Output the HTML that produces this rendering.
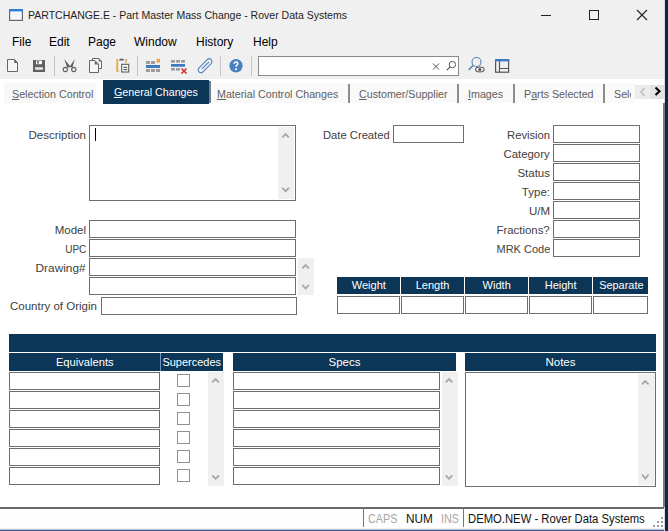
<!DOCTYPE html>
<html><head><meta charset="utf-8">
<style>
*{box-sizing:border-box;margin:0;padding:0}
html,body{width:668px;height:531px;overflow:hidden;background:#f0f0f0;font-family:"Liberation Sans",sans-serif}
.a{position:absolute}
.t{position:absolute;white-space:nowrap;line-height:1;transform-origin:0 0}
.r{position:absolute;white-space:nowrap;line-height:1;text-align:right;transform-origin:100% 0}
.c{position:absolute;white-space:nowrap;line-height:1;text-align:center}
.box{position:absolute;border:1px solid #6e6e6e;background:#fff;height:18px}
.hd{position:absolute;background:#0c3657;color:#fff;font-size:11.5px;line-height:17px;text-align:center;height:17px}
.lbl{font-size:11.5px;color:#404040}
.sx{display:inline-block}
.sb{position:absolute;background:#f0f0f0}
.chk{position:absolute;width:13px;height:13px;border:1px solid #909090;background:#fff}
.sep{position:absolute;width:1px;background:#c8c8c8}
.tsep{position:absolute;width:2px;background:#8c8c8c;top:84px;height:19px}
.tab{font-size:11.5px;color:#606060}
.u{text-decoration:underline;text-underline-offset:0.6px;text-decoration-thickness:1px}
</style></head><body>
<!-- title bar -->
<svg class="a" style="left:9px;top:9px" width="14" height="12" viewBox="0 0 14 12">
<rect x="0.6" y="0.6" width="12.8" height="10.8" fill="#f6f7f9" stroke="#5f6b78" stroke-width="1.2"/>
<rect x="0" y="0" width="14" height="2.4" fill="#2f7bd3"/>
</svg>
<div class="t" style="left:28px;top:9.7px;font-size:11px;color:#1e1e1e;transform:scaleX(0.955)">PARTCHANGE.E - Part Master Mass Change - Rover Data Systems</div>
<div class="a" style="left:541px;top:15px;width:10px;height:1px;background:#222"></div>
<div class="a" style="left:589px;top:10px;width:10px;height:10px;border:1px solid #222"></div>
<svg class="a" style="left:636px;top:9px" width="12" height="12" viewBox="0 0 12 12"><path d="M1 1L11 11M11 1L1 11" stroke="#222" stroke-width="1.1"/></svg>

<!-- menu -->
<div class="t" style="left:12px;top:35.8px;font-size:12px;color:#000">File</div>
<div class="t" style="left:49px;top:35.8px;font-size:12px;color:#000">Edit</div>
<div class="t" style="left:88px;top:35.8px;font-size:12px;color:#000">Page</div>
<div class="t" style="left:134px;top:35.8px;font-size:12px;color:#000">Window</div>
<div class="t" style="left:196px;top:35.8px;font-size:12px;color:#000">History</div>
<div class="t" style="left:253px;top:35.8px;font-size:12px;color:#000">Help</div>

<!-- toolbar -->
<svg class="a" style="left:0;top:50px" width="520" height="30" viewBox="0 50 520 30">
<g fill="none" stroke="#666" stroke-width="1">
<path d="M7.5 59.5H14.5L17.5 62.5V71.5H7.5Z" fill="#f6f6f6"/>
</g>
<path d="M14.2 59.2L18 63H14.2Z" fill="#666"/>
<path d="M33 60H45V72H33Z" fill="#606060"/>
<rect x="36" y="60.6" width="6" height="3.6" fill="#fff"/>
<rect x="37.2" y="61" width="1.6" height="2.6" fill="#606060"/>
<rect x="35" y="67.2" width="8" height="2.6" fill="#e4e4e4"/>
<rect x="54" y="56" width="1" height="20" fill="#c4c4c4"/>
<g fill="none" stroke="#5e5e5e" stroke-width="1.1">
<circle cx="65.3" cy="69.5" r="2.1"/>
<circle cx="73.8" cy="69.5" r="2.1"/>
</g>
<path d="M64.2 59L70.4 66.4L69 67.6L67.2 67.6Z" fill="#5e5e5e"/>
<path d="M74.8 59L69.8 66.4L71 67.6L72.4 67.6Z" fill="#5e5e5e"/>
<g stroke="#666" stroke-width="1" fill="#f6f6f6">
<path d="M92.5 58.5H99L101.5 61V68.5H92.5Z"/>
<path d="M89.5 60.5H95L98.5 64V72.5H89.5Z"/>
</g>
<path d="M98.7 58.7L101.6 61.6H98.7Z" fill="#666"/>
<path d="M94.7 60.7L98.4 64.4H94.7Z" fill="#666"/>
<rect x="116.3" y="59" width="1.8" height="12.4" fill="#eba746"/>
<rect x="116.3" y="70.5" width="3" height="1" fill="#e2a450"/>
<rect x="125.2" y="59" width="1.6" height="3.6" fill="#e2a656"/>
<path d="M119.2 60.6V59.4Q121.5 57.6 123.8 59.4V60.6Z" fill="#55606e"/>
<rect x="121.7" y="64.3" width="7" height="7.7" fill="#fafafa" stroke="#5e5e5e" stroke-width="1.1"/>
<rect x="123.4" y="66.8" width="3.8" height="1.1" fill="#555"/>
<rect x="123.4" y="69" width="3.8" height="1.1" fill="#555"/>
<rect x="137" y="56" width="1" height="20" fill="#c4c4c4"/>
<g fill="#9c9c9c">
<rect x="146" y="61" width="4" height="3"/><rect x="151" y="61" width="4" height="3"/>
<rect x="146" y="69" width="4" height="3"/><rect x="151" y="69" width="4" height="3"/><rect x="156" y="69" width="4" height="3"/>
<rect x="171" y="60" width="4" height="2.6"/><rect x="176" y="60" width="4" height="2.6"/><rect x="181" y="60" width="4" height="2.6"/>
<rect x="171" y="68" width="4" height="2.6"/><rect x="176" y="68" width="4" height="2.6"/>
</g>
<rect x="151" y="61" width="4" height="3" fill="#9c9c9c"/><rect x="156.5" y="58.8" width="3.6" height="3.8" fill="#eea64e"/>
<rect x="146" y="65" width="14" height="3" fill="#3d7ac4"/>
<rect x="171" y="64" width="14" height="2.7" fill="#3d7ac4"/>
<path d="M181.5 68.5L186.5 73.5M186.5 68.5L181.5 73.5" stroke="#d42a2a" stroke-width="1.6"/>
<g transform="translate(205.1 65.7) rotate(45)" fill="none" stroke="#4d7fbd" stroke-width="1.05">
<rect x="-2.8" y="-8.6" width="5.6" height="17.2" rx="2.8"/><path d="M0 -5.5V4.5"/>
</g>
<rect x="220" y="56" width="1" height="20" fill="#c4c4c4"/>
<circle cx="236" cy="65.8" r="6.7" fill="#4a7fc2"/>
<path d="M234.2 63.8Q234.2 62 236 62Q237.8 62 237.8 63.6Q237.8 64.5 236.8 65.1Q236 65.6 236 66.8" fill="none" stroke="#fff" stroke-width="1.5"/>
<rect x="235.1" y="68.3" width="1.8" height="1.8" fill="#fff"/>
<rect x="251" y="56" width="1" height="20" fill="#c4c4c4"/>
<rect x="258.5" y="56.5" width="200" height="19" fill="#fff" stroke="#8a8a8a"/>
<path d="M433 63.5L439 69.5M439 63.5L433 69.5" stroke="#555" stroke-width="1"/>
<circle cx="452.4" cy="64.6" r="3.2" fill="none" stroke="#555" stroke-width="1"/>
<path d="M450.2 66.8L446.8 70.2" stroke="#555" stroke-width="1.2"/>
<circle cx="476.5" cy="62" r="4.5" fill="none" stroke="#5782b8" stroke-width="1.1"/>
<path d="M473.2 65.4L468.6 70" stroke="#5782b8" stroke-width="1.5"/>
<ellipse cx="479.8" cy="69.5" rx="4.3" ry="2.5" fill="#f0f0f0" stroke="#5a5a5a" stroke-width="1.1"/>
<circle cx="479.8" cy="69.5" r="1.5" fill="#505050"/>
<rect x="495.6" y="59.6" width="13" height="12.6" fill="none" stroke="#555" stroke-width="1.2"/>
<rect x="495" y="59" width="14.2" height="2.4" fill="#3d7ac4"/>
<path d="M499.5 61V72M499.5 68.5H509" stroke="#555" stroke-width="1.1"/>
</svg>

<!-- tab strip -->
<div class="a" style="left:0;top:79px;width:664px;height:25px;background:#fff"></div>
<div class="a" style="left:4px;top:83px;width:92px;height:20px;background:#f8f8f8"></div>
<div class="t tab" style="left:12px;top:88.5px;transform:scaleX(0.93)"><span class="u">S</span>election Control</div>
<div class="a" style="left:211px;top:83px;width:424px;height:20px;background:#f9f9f9"></div>
<div class="a" style="left:103px;top:80px;width:106px;height:24px;background:#0c3657"></div>
<div class="a" style="left:209px;top:81px;width:2px;height:22px;background:#6f7d8c"></div>
<div class="t tab" style="left:114px;top:87px;color:#fff;transform:scaleX(0.93)"><span class="u">G</span>eneral Changes</div>
<div class="t tab" style="left:217px;top:88.5px;transform:scaleX(0.93)"><span class="u">M</span>aterial Control Changes</div>
<div class="tsep" style="left:348px"></div>
<div class="t tab" style="left:359px;top:88.5px;transform:scaleX(0.93)"><span class="u">C</span>ustomer/Supplier</div>
<div class="tsep" style="left:457px"></div>
<div class="t tab" style="left:468px;top:88.5px;transform:scaleX(0.93)"><span class="u">I</span>mages</div>
<div class="tsep" style="left:513px"></div>
<div class="t tab" style="left:524px;top:88.5px;transform:scaleX(0.93)">P<span class="u">a</span>rts Selected</div>
<div class="tsep" style="left:603px"></div>
<div class="a" style="left:612px;top:84px;width:19px;height:20px;overflow:hidden"><div class="t tab" style="left:2px;top:4.5px;transform:scaleX(0.93)">Selection</div></div>
<div class="a" style="left:635px;top:85px;width:15px;height:14px;background:#ececec"></div>
<div class="a" style="left:650px;top:85px;width:14px;height:14px;background:#e2e2e2"></div>
<svg class="a" style="left:635px;top:85px" width="29" height="14" viewBox="0 0 29 14">
<path d="M9.5 3L6 7L9.5 11" fill="none" stroke="#bdbdbd" stroke-width="1.6"/>
<path d="M20.5 2.5L24.5 6.3L20.5 10.1" fill="none" stroke="#000" stroke-width="2.1"/>
</svg>

<!-- content -->
<div class="a" style="left:0;top:104px;width:664px;height:404px;background:#fff"></div>

<div class="r lbl" style="right:582px;top:130px">Description</div>
<div class="box" style="left:89px;top:125px;width:207px;height:76px"></div>
<div class="sb" style="left:278px;top:127px;width:16px;height:72px"></div>
<div class="a" style="left:95px;top:128px;width:1px;height:13px;background:#000"></div>

<div class="t lbl" style="left:323px;top:130px;transform:scaleX(0.975)">Date Created</div>
<div class="box" style="left:393px;top:125px;width:71px"></div>

<div class="r lbl" style="right:118px;top:130px;transform:scaleX(0.977)">Revision</div>
<div class="box" style="left:553px;top:125px;width:87px"></div>
<div class="r lbl" style="right:118px;top:149px;transform:scaleX(0.99)">Category</div>
<div class="box" style="left:553px;top:144px;width:87px"></div>
<div class="r lbl" style="right:118px;top:168px">Status</div>
<div class="box" style="left:553px;top:163px;width:87px"></div>
<div class="r lbl" style="right:118px;top:187px">Type:</div>
<div class="box" style="left:553px;top:182px;width:87px"></div>
<div class="r lbl" style="right:118px;top:206px">U/M</div>
<div class="box" style="left:553px;top:201px;width:87px"></div>
<div class="r lbl" style="right:118px;top:225px;transform:scaleX(0.99)">Fractions?</div>
<div class="box" style="left:553px;top:220px;width:87px"></div>
<div class="r lbl" style="right:118px;top:244px;transform:scaleX(0.955)">MRK Code</div>
<div class="box" style="left:553px;top:239px;width:87px"></div>

<div class="r lbl" style="right:582px;top:225px">Model</div>
<div class="box" style="left:89px;top:220px;width:207px"></div>
<div class="r lbl" style="right:582px;top:244px;transform:scaleX(0.87)">UPC</div>
<div class="box" style="left:89px;top:239px;width:207px"></div>
<div class="r lbl" style="right:582px;top:263px;transform:scaleX(1.03)">Drawing#</div>
<div class="box" style="left:89px;top:258px;width:207px"></div>
<div class="box" style="left:89px;top:277px;width:207px"></div>
<div class="sb" style="left:298px;top:258px;width:16px;height:37px"></div>
<div class="t lbl" style="left:10px;top:301px">Country of Origin</div>
<div class="box" style="left:101px;top:297px;width:196px"></div>

<div class="hd" style="left:337px;top:277px;width:63px"><span class="sx" style="transform:scaleX(0.96)">Weight</span></div>
<div class="hd" style="left:401px;top:277px;width:63px"><span class="sx" style="transform:scaleX(0.96)">Length</span></div>
<div class="hd" style="left:465px;top:277px;width:63px"><span class="sx" style="transform:scaleX(0.96)">Width</span></div>
<div class="hd" style="left:529px;top:277px;width:63px"><span class="sx" style="transform:scaleX(0.96)">Height</span></div>
<div class="hd" style="left:593px;top:277px;width:55px;padding-left:2px"><span class="sx" style="transform:scaleX(0.95)">Separate</span></div>
<div class="box" style="left:337px;top:296px;width:63px"></div>
<div class="box" style="left:401px;top:296px;width:63px"></div>
<div class="box" style="left:465px;top:296px;width:63px"></div>
<div class="box" style="left:529px;top:296px;width:63px"></div>
<div class="box" style="left:593px;top:296px;width:55px"></div>

<div class="a" style="left:9px;top:334px;width:647px;height:18px;background:#0c3657"></div>
<div class="hd" style="left:9px;top:353px;width:151px;height:18px;line-height:18px"><span class="sx" style="transform:scaleX(0.97)">Equivalents</span></div>
<div class="a" style="left:160px;top:353px;width:1px;height:18px;background:#7193c4"></div>
<div class="hd" style="left:161px;top:353px;width:62px;height:18px;line-height:18px"><span class="sx" style="transform:scaleX(0.955)">Supercedes</span></div>
<div class="hd" style="left:233px;top:353px;width:223px;height:18px;line-height:18px">Specs</div>
<div class="hd" style="left:465px;top:353px;width:191px;height:18px;line-height:18px">Notes</div>

<div class="box" style="left:9px;top:372px;width:151px"></div>
<div class="chk" style="left:177px;top:374px"></div>
<div class="box" style="left:233px;top:372px;width:207px"></div>
<div class="box" style="left:9px;top:391px;width:151px"></div>
<div class="chk" style="left:177px;top:393px"></div>
<div class="box" style="left:233px;top:391px;width:207px"></div>
<div class="box" style="left:9px;top:410px;width:151px"></div>
<div class="chk" style="left:177px;top:412px"></div>
<div class="box" style="left:233px;top:410px;width:207px"></div>
<div class="box" style="left:9px;top:429px;width:151px"></div>
<div class="chk" style="left:177px;top:431px"></div>
<div class="box" style="left:233px;top:429px;width:207px"></div>
<div class="box" style="left:9px;top:448px;width:151px"></div>
<div class="chk" style="left:177px;top:450px"></div>
<div class="box" style="left:233px;top:448px;width:207px"></div>
<div class="box" style="left:9px;top:467px;width:151px"></div>
<div class="chk" style="left:177px;top:469px"></div>
<div class="box" style="left:233px;top:467px;width:207px"></div>
<div class="sb" style="left:208px;top:372px;width:16px;height:114px"></div>
<div class="sb" style="left:442px;top:372px;width:16px;height:114px"></div>
<div class="box" style="left:465px;top:372px;width:191px;height:115px"></div>
<div class="sb" style="left:638px;top:374px;width:17px;height:111px"></div>

<svg class="a" style="left:0;top:0" width="668" height="531"><g fill="none" stroke="#a6a6a6" stroke-width="1.8"><path d="M282.3 137.4L285.6 134.1L288.90000000000003 137.4M282.3 187.9L285.6 191.2L288.90000000000003 187.9"/><path d="M302.3 268.4L305.6 265.1L308.90000000000003 268.4M302.3 284.9L305.6 288.5L308.90000000000003 284.9"/><path d="M212.29999999999998 382.4L215.6 379.1L218.9 382.4M212.29999999999998 475.3L215.6 478.8L218.9 475.3"/><path d="M445.7 382.4L449.0 379.1L452.3 382.4M445.7 475.3L449.0 478.8L452.3 475.3"/><path d="M642.0 384.4L645.3 381.1L648.5999999999999 384.4M642.0 474.5L645.3 478.6L648.5999999999999 474.5"/></g></svg>
<!-- status bar -->
<div class="a" style="left:0;top:507px;width:664px;height:2px;background:#6a6a6a"></div>
<div class="a" style="left:0;top:509px;width:664px;height:20px;background:#fefefe"></div>
<div class="a" style="left:0;top:528px;width:664px;height:1px;background:#eef2ee"></div>
<div class="a" style="left:0;top:529px;width:665px;height:1px;background:#b4bfd2"></div>
<div class="a" style="left:0;top:530px;width:665px;height:1px;background:#4a5c8e"></div>
<svg class="a" style="left:650px;top:515px" width="14" height="14"><g fill="#9a9a9a"><rect x="11" y="2" width="2" height="2"/><rect x="7" y="6" width="2" height="2"/><rect x="11" y="6" width="2" height="2"/><rect x="3" y="10" width="2" height="2"/><rect x="7" y="10" width="2" height="2"/><rect x="11" y="10" width="2" height="2"/></g></svg>
<div class="sep" style="left:363px;top:509px;height:18px;background:#777"></div>
<div class="t" style="left:368px;top:512.8px;font-size:12px;color:#a8a8a8;transform:scaleX(0.9)">CAPS</div>
<div class="t" style="left:406px;top:512.8px;font-size:12px;color:#111;transform:scaleX(0.98)">NUM</div>
<div class="t" style="left:441px;top:512.8px;font-size:12px;color:#a8a8a8;transform:scaleX(0.9)">INS</div>
<div class="sep" style="left:463px;top:509px;height:18px;background:#777"></div>
<div class="t" style="left:468px;top:512.8px;font-size:12px;color:#111;transform:scaleX(0.94)">DEMO.NEW - Rover Data Systems</div>
<!-- right navy edge -->
<div class="a" style="left:664px;top:0;width:1px;height:531px;background:#d8dde4"></div>
<div class="a" style="left:665px;top:0;width:3px;height:531px;background:#0a2849"></div>
<div class="a" style="left:663px;top:103px;width:2px;height:404px;background:#737a87"></div>

</body></html>
